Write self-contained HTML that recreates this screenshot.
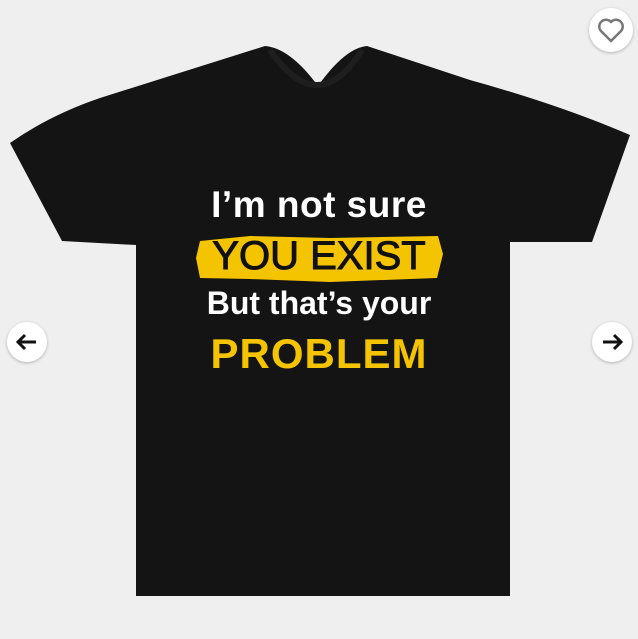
<!DOCTYPE html>
<html><head><style>
body{margin:0;width:638px;height:639px;background:#efefef;position:relative;overflow:hidden;font-family:"Liberation Sans",Arial,sans-serif}
.t{position:absolute;left:0;width:638px;text-align:center;font-weight:bold;white-space:nowrap}
.btn{position:absolute;width:40px;height:40px;border-radius:50%;background:#fff;box-shadow:0 1px 3px rgba(0,0,0,.25)}
</style></head><body>
<svg width="638" height="639" style="position:absolute;left:0;top:0">
<path d="M265,46 Q290,48 318,86 Q345,48 367,46 L470,80 Q560,105 630,135 L592,242 L510,242 L510,596 L136,596 L136,245 L62,241 L10,143 Q50,115 100,98 Z" fill="#141414"/>
<path d="M270,50 Q318,120 362,50" fill="none" stroke="#1e1e1e" stroke-width="6"/>
<path d="M200,241 L250,236 L330,238 L438,236 L443,254 L437,278 L330,282 L250,279 L200,278 L196,258 Z" fill="#f5c400"/>
</svg>
<div class="t" style="top:184px;font-size:37px;color:#fff;letter-spacing:0.5px">I’m not sure</div>
<div class="t" style="top:234px;font-size:40px;color:#111;font-weight:normal;letter-spacing:0;-webkit-text-stroke:1px #111">YOU EXIST</div>
<div class="t" style="top:285px;font-size:32px;color:#fff">But that’s your</div>
<div class="t" style="top:330px;font-size:42px;color:#f5c400;letter-spacing:1px">PROBLEM</div>
<div class="btn" style="left:7px;top:322px"><svg width="40" height="40"><path d="M29,20 H12 M18,13 L11,20 L18,27" fill="none" stroke="#111" stroke-width="3"/></svg></div>
<div class="btn" style="left:592px;top:322px"><svg width="40" height="40"><path d="M11,20 H28 M22,13 L29,20 L22,27" fill="none" stroke="#111" stroke-width="3"/></svg></div>
<div class="btn" style="left:589px;top:8px;width:44px;height:44px"><svg width="44" height="44"><path d="M22,33 L12,23 A6,6 0 0 1 22,14 A6,6 0 0 1 32,23 Z" fill="none" stroke="#777" stroke-width="2.5" stroke-linejoin="round"/></svg></div>
</body></html>
